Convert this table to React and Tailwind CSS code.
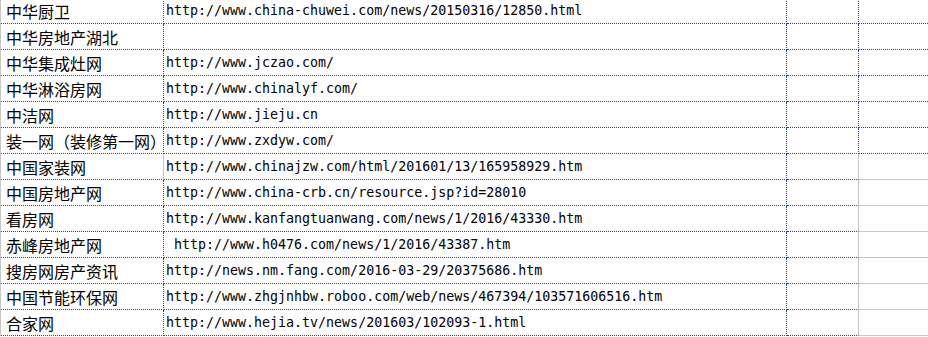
const ROWS = [
  { name: "中华厨卫", url: "http://www.china-chuwei.com/news/20150316/12850.html" },
  { name: "中华房地产湖北", url: "" },
  { name: "中华集成灶网", url: "http://www.jczao.com/" },
  { name: "中华淋浴房网", url: "http://www.chinalyf.com/" },
  { name: "中洁网", url: "http://www.jieju.cn" },
  { name: "装一网（装修第一网）", url: "http://www.zxdyw.com/" },
  { name: "中国家装网", url: "http://www.chinajzw.com/html/201601/13/165958929.htm" },
  { name: "中国房地产网", url: "http://www.china-crb.cn/resource.jsp?id=28010" },
  { name: "看房网", url: "http://www.kanfangtuanwang.com/news/1/2016/43330.htm" },
  { name: "赤峰房地产网", url: " http://www.h0476.com/news/1/2016/43387.htm" },
  { name: "搜房网房产资讯", url: "http://news.nm.fang.com/2016-03-29/20375686.htm" },
  { name: "中国节能环保网", url: "http://www.zhgjnhbw.roboo.com/web/news/467394/103571606516.htm" },
  { name: "合家网", url: "http://www.hejia.tv/news/201603/102093-1.html" },
];

export default function App() {
  return (
    <div className="h-[337px] w-[928px] overflow-hidden bg-white">
      <div className="-mt-[2px] grid grid-cols-[163px_623px_72px_1fr] border-l border-l-[#c6c6c6]">
        {ROWS.map((row, i) => {
          // top rows carry the dotted border across the last column too
          const styled = i < 6;
          return (
            <div key={i} className="contents">
              <div
                className={`flex h-[26px] items-center whitespace-nowrap border-b border-r border-dotted border-[#0052d9] pl-[5px] pt-[1px] font-['Noto_Sans_CJK_SC','Noto_Sans',sans-serif] text-[16px] text-black ${
                  i === 6 ? "border-r-[#c6c6c6] [border-right-style:solid]" : ""
                }`}
              >
                {row.name}
              </div>
              <div className="flex h-[26px] items-center whitespace-pre border-b border-r border-dotted border-[#0052d9] pl-[2px] pt-[1px] font-['DejaVu_Sans_Mono','Liberation_Mono',monospace] text-[13.3px] text-black">
                {row.url}
              </div>
              <div
                className={`h-[26px] border-b border-r border-dotted border-[#0052d9] ${
                  styled ? "" : "border-r-[#c6c6c6] [border-right-style:solid]"
                }`}
              />
              <div
                className={`h-[26px] border-b ${
                  styled ? "border-dotted border-[#0052d9]" : "border-solid border-[#c6c6c6]"
                }`}
              />
            </div>
          );
        })}
      </div>
    </div>
  );
}
